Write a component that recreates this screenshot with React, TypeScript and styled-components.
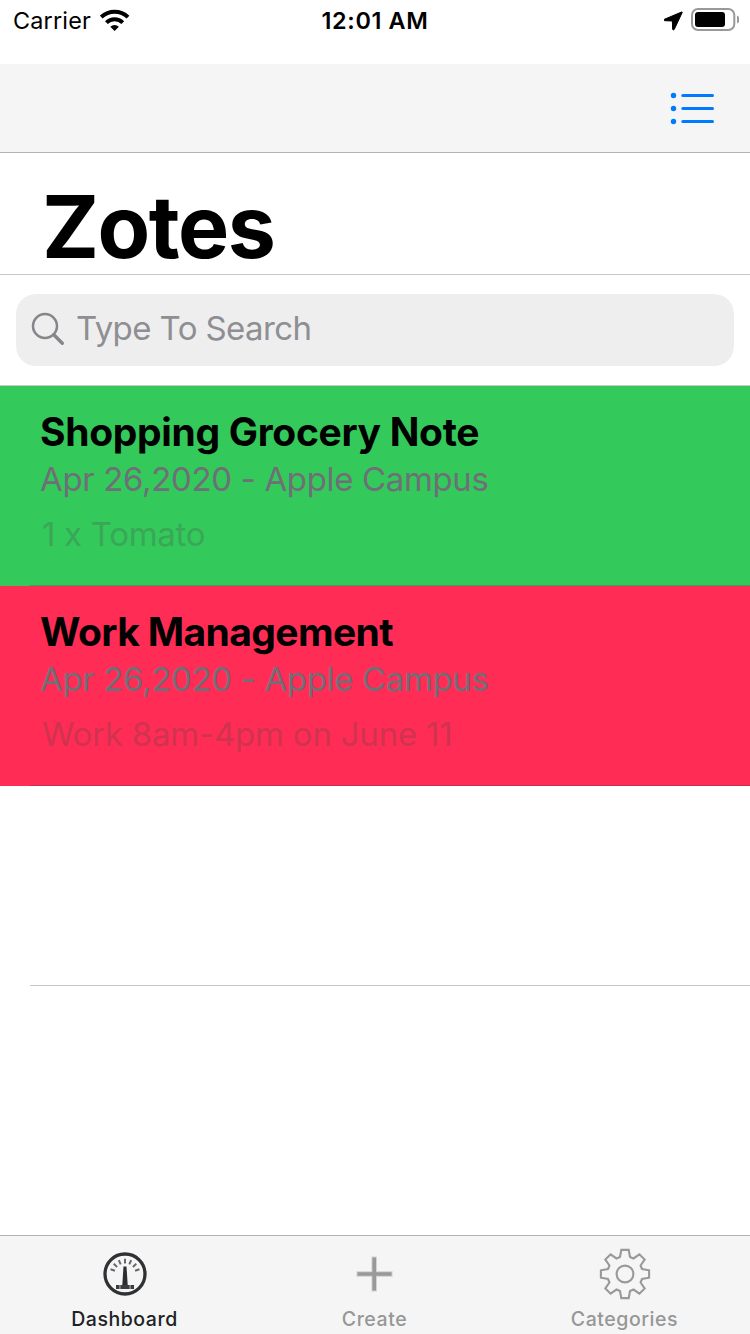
import React from "react";
import styled, { createGlobalStyle } from "styled-components";

const GlobalStyle = createGlobalStyle`
  * { box-sizing: border-box; }
  body {
    margin: 0;
    background: #fff;
    font-family: Inter, "Liberation Sans", sans-serif;
    font-feature-settings: "calt" 0;
  }
`;

const Screen = styled.div`
  display: flex;
  flex-direction: column;
  width: 750px;
  height: 1334px;
  overflow: hidden;
  background: #fff;
  color: #000;
  white-space: nowrap;
`;

const StatusBar = styled.header`
  display: grid;
  grid-template-columns: 1fr auto 1fr;
  height: 64px;
  padding: 0 11px 0 13px;
  line-height: 41px;
  font-size: 23.4px;
`;

const StatusGroup = styled.div<{ $end?: boolean }>`
  display: flex;
  height: 41px;
  justify-content: ${(p) => (p.$end ? "flex-end" : "flex-start")};
`;

const Carrier = styled.span`
  width: 87px;
  letter-spacing: 0.2px;
`;

const Clock = styled.time`
  padding-right: 2px;
  font-weight: 600;
  font-size: 23.4px;
  letter-spacing: 0.65px;
`;

const NavBar = styled.nav`
  display: flex;
  justify-content: flex-end;
  height: 89px;
  padding: 28px 36px 0 0;
  background: #f5f5f5;
  border-bottom: 1px solid #b2b2b2;
`;

const Heading = styled.h1`
  margin: 0;
  height: 122px;
  padding: 24px 0 0 42px;
  border-bottom: 1px solid #c6c6c8;
  font-size: 86px;
  font-weight: 700;
  line-height: 100px;
  letter-spacing: -1.5px;
`;

const SearchArea = styled.div`
  height: 111px;
  padding: 19px 16px;
  border-bottom: 1px solid #c6c6c8;
`;

const SearchField = styled.div`
  display: flex;
  height: 72px;
  padding-left: 15px;
  border-radius: 20px;
  background: #eeeeef;
  color: #8e8e93;
  font-size: 33px;
  line-height: 69px;
  letter-spacing: -0.6px;
`;

const SearchIcon = styled.svg`
  margin: 18px 11px 0 0;
`;

const NoteList = styled.main`
  display: flex;
  flex: 1;
  flex-direction: column;
`;

const NoteRow = styled.article<{ $color?: string; $line: string }>`
  display: flex;
  flex-direction: column;
  height: 200px;
  padding: 22px 0 0 40px;
  background: linear-gradient(${(p) => p.$line}, ${(p) => p.$line}) 30px 199px / 720px 1px
    no-repeat ${(p) => p.$color ?? "#fff"};
`;

const NoteTitle = styled.h2<{ $spacing: number }>`
  margin: 0;
  height: 48px;
  font-size: 39px;
  font-weight: 700;
  line-height: 48px;
  letter-spacing: ${(p) => p.$spacing}px;
`;

const NoteMeta = styled.div`
  height: 46px;
  color: #6f6f78;
  font-size: 33px;
  line-height: 46px;
  letter-spacing: -0.35px;
`;

const NoteBody = styled.p<{ $tint: string; $spacing: number }>`
  margin: 9px 0 0;
  padding-left: 2px;
  color: ${(p) => p.$tint};
  font-size: 33px;
  line-height: 46px;
  letter-spacing: ${(p) => p.$spacing}px;
`;

const TabBar = styled.nav`
  display: grid;
  grid-template-columns: repeat(3, 1fr);
  height: 99px;
  border-top: 1px solid #b2b2b2;
  background: #f5f5f5;
`;

const Tab = styled.div<{ $active?: boolean }>`
  display: flex;
  flex-direction: column;
  align-items: center;
  padding-top: 12px;
  color: ${(p) => (p.$active ? "#202124" : "#979797")};
  font-size: 19.5px;
  font-weight: 500;
  line-height: 24px;

  svg {
    margin-bottom: 7px;
  }
`;

const TabLabel = styled.span`
  padding-right: 1px;
  letter-spacing: 0.55px;
`;

const WifiIcon = () => (
  <svg width="30" height="41" viewBox="0 0 30 41" fill="none" stroke="#000">
    <path d="M1.2 17.1a19.6 19.6 0 0 1 26.8 0" strokeWidth="4" />
    <path d="M6.4 22.6a11.9 11.9 0 0 1 16.4 0" strokeWidth="4" />
    <path d="M10.3 26.8a6.2 6.2 0 0 1 8.6 0l-4.3 4.2z" fill="#000" stroke="none" />
  </svg>
);

const LocationIcon = () => (
  <svg width="27" height="41" viewBox="0 0 27 41">
    <path
      d="M17.6 12 .6 19.2c-1 .4-.8 1.5.2 1.5l7.6.3.2 8c0 1 1.3 1.3 1.7.3l7.9-16.8q.2-.7-.6-.5z"
      fill="#000"
      stroke="#000"
      strokeLinejoin="round"
      strokeWidth="1"
    />
  </svg>
);

const BatteryIcon = () => (
  <svg width="48" height="41" viewBox="0 0 48 41">
    <rect x="1" y="9" width="42.3" height="21" rx="6" fill="none" stroke="#999" strokeWidth="2" />
    <rect x="4" y="12" width="30" height="15" rx="3" />
    <path d="M46 15.6q2.6 1.2 2.6 3.9t-2.6 3.9z" fill="#999" />
  </svg>
);

const ListIcon = () => (
  <svg width="44" height="34" viewBox="0 0 44 34" fill="#007aff">
    {[3.5, 16.5, 29.5].map((y) => (
      <g key={y}>
        <circle cx="3.5" cy={y} r="2.7" />
        <rect x="11.3" y={y - 1.5} width="32.7" height="3" rx="1.5" />
      </g>
    ))}
  </svg>
);

const GaugeIcon = () => (
  <svg width="52" height="52" viewBox="-26 -26 52 52">
    <circle r="20" fill="none" stroke="#2f3135" strokeWidth="3.3" />
    {[-72, -48, -24, 0, 24, 48, 72].map((angle) => (
      <path
        key={angle}
        d="M0-15.2v4.6"
        stroke="#66686b"
        strokeWidth="2"
        transform={`rotate(${angle})`}
      />
    ))}
    <path d="M-1.5-7.5h3L2.7 11h-5.4z" fill="#2b2d31" />
    <path d="M-9 13H9" stroke="#3a3c40" strokeWidth="4" strokeDasharray="3.6 .7 9.4 .7" />
  </svg>
);

const PlusIcon = () => (
  <svg width="52" height="52" viewBox="0 0 52 52" stroke="#999">
    <path d="M7.5 26h36M25.2 8.5v35" strokeWidth="5.4" opacity=".4" />
    <path d="M8.5 26h34M25.2 9.5v33" strokeWidth="3.6" />
  </svg>
);

const GearIcon = () => {
  const tooth: [number, number][] = [
    [-5, -17],
    [-3.7, -24.1],
    [3.7, -24.1],
    [5, -17],
  ];
  const points = Array.from({ length: 8 }, (_, i) => {
    const a = (i * Math.PI) / 4;
    return tooth.map(([x, y]) =>
      [x * Math.cos(a) - y * Math.sin(a), x * Math.sin(a) + y * Math.cos(a)]
        .map((n) => n.toFixed(2))
        .join(","),
    );
  })
    .flat()
    .join(" ");
  return (
    <svg width="52" height="52" viewBox="-26 -26 52 52" fill="none" stroke="#999" strokeWidth="2.1">
      <polygon points={points} />
      <circle r="8.4" />
    </svg>
  );
};

const notes = [
  {
    title: "Shopping Grocery Note",
    meta: "Apr 26,2020 - Apple Campus",
    body: "1 x Tomato",
    color: "#34c95b",
    tint: "#3aa758",
    line: "#3aa155",
    titleSpacing: -0.32,
    bodySpacing: -0.3,
  },
  {
    title: "Work Management",
    meta: "Apr 26,2020 - Apple Campus",
    body: "Work 8am-4pm on June 11",
    color: "#ff2d55",
    tint: "#d03350",
    line: "#c82f4e",
    titleSpacing: -0.6,
    bodySpacing: -0.22,
  },
];

export default function App() {
  return (
    <>
      <GlobalStyle />
      <Screen>
        <StatusBar>
          <StatusGroup>
            <Carrier>Carrier</Carrier>
            <WifiIcon />
          </StatusGroup>
          <Clock>12:01 AM</Clock>
          <StatusGroup $end>
            <LocationIcon />
            <BatteryIcon />
          </StatusGroup>
        </StatusBar>
        <NavBar>
          <ListIcon />
        </NavBar>
        <Heading>Zotes</Heading>
        <SearchArea>
          <SearchField>
            <SearchIcon width="34" height="34" viewBox="0 0 34 34" fill="none" stroke="#85858a">
              <circle cx="14" cy="14" r="12" strokeWidth="2.5" />
              <path d="m22.8 22.8 8.5 8.5" strokeWidth="3.4" strokeLinecap="round" />
            </SearchIcon>
            <span>Type To Search</span>
          </SearchField>
        </SearchArea>
        <NoteList>
          {notes.map((note) => (
            <NoteRow key={note.title} $color={note.color} $line={note.line}>
              <NoteTitle $spacing={note.titleSpacing}>{note.title}</NoteTitle>
              <NoteMeta>{note.meta}</NoteMeta>
              <NoteBody $tint={note.tint} $spacing={note.bodySpacing}>
                {note.body}
              </NoteBody>
            </NoteRow>
          ))}
          <NoteRow $line="#c6c6c8" />
        </NoteList>
        <TabBar>
          <Tab $active>
            <GaugeIcon />
            <TabLabel>Dashboard</TabLabel>
          </Tab>
          <Tab>
            <PlusIcon />
            <TabLabel>Create</TabLabel>
          </Tab>
          <Tab>
            <GearIcon />
            <TabLabel>Categories</TabLabel>
          </Tab>
        </TabBar>
      </Screen>
    </>
  );
}
